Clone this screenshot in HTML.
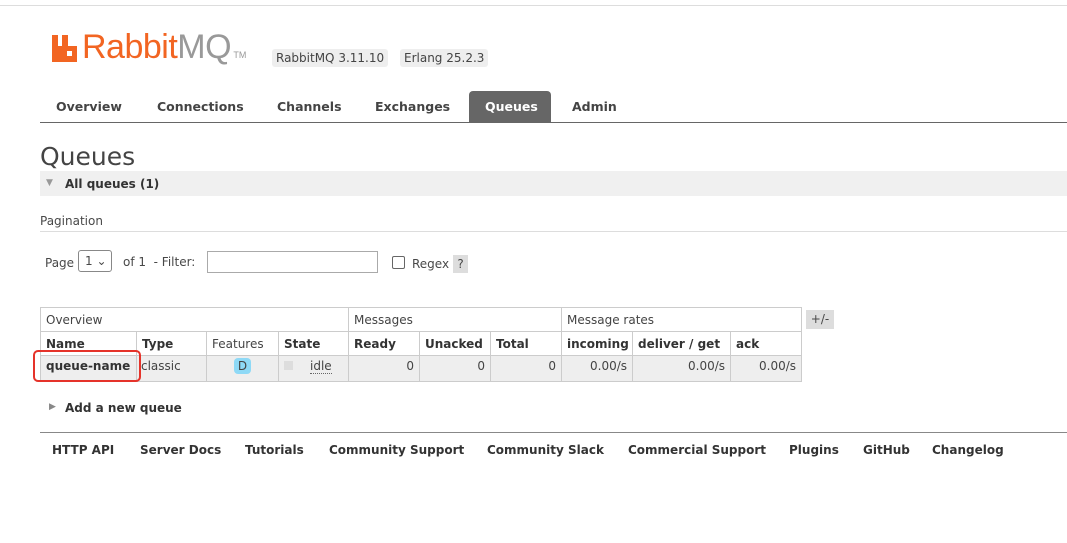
<!DOCTYPE html>
<html><head><style>
body{margin:0;width:1067px;height:543px;background:#fff;font-family:"DejaVu Sans","Liberation Sans",sans-serif;font-size:12px;color:#484848;position:relative;overflow:hidden}
.a{position:absolute;white-space:nowrap}
.b{font-weight:bold;color:#333}
.nav{font-size:12.5px;font-weight:bold;color:#444}
table{position:absolute;left:40px;top:307px;border-collapse:collapse;font-size:12px;table-layout:fixed}
td{border:1px solid #ccc;padding:0 5px;height:23px;color:#444;overflow:hidden}
tr.h td{font-weight:bold;color:#333}
tr.d td{background:#eee;height:22px;text-align:right;vertical-align:top;padding-top:3px;box-sizing:content-box}
</style></head><body>
<div class="a" style="left:0;top:5px;width:1067px;height:1px;background:#ddd"></div>
<svg class="a" style="left:52px;top:35px" width="27" height="27" viewBox="0 0 27 27"><path d="M0 0h6v11h4V0h6v11h9v16H0z" fill="#f26522"/><rect x="15" y="16" width="5" height="5" fill="#fff"/></svg>
<div class="a" style="left:82px;top:28px;font-family:'Liberation Sans',sans-serif;font-size:34px;color:#f26522;letter-spacing:-0.5px">Rabbit<span style="color:#999">MQ</span><span style="font-size:9px;color:#999;letter-spacing:0"> TM</span></div>
<div class="a" style="left:272px;top:49px;background:#eee;padding:2px 4px;border-radius:3px;color:#444">RabbitMQ 3.11.10</div>
<div class="a" style="left:400px;top:49px;background:#eee;padding:2px 4px;border-radius:3px;color:#444">Erlang 25.2.3</div>
<div class="a nav" style="left:56px;top:99px">Overview</div>
<div class="a nav" style="left:157px;top:99px">Connections</div>
<div class="a nav" style="left:277px;top:99px">Channels</div>
<div class="a nav" style="left:375px;top:99px">Exchanges</div>
<div class="a" style="left:469px;top:91px;width:82px;height:31px;background:#666;border-radius:4px 4px 0 0"></div>
<div class="a nav" style="left:485px;top:99px;color:#fff">Queues</div>
<div class="a nav" style="left:572px;top:99px">Admin</div>
<div class="a" style="left:40px;top:122px;width:1027px;height:1px;background:#666"></div>
<div class="a" style="left:40px;top:142px;font-size:25px;color:#444">Queues</div>
<div class="a" style="left:40px;top:171px;width:1027px;height:25px;background:#f0f0f0"></div>
<div class="a" style="left:46px;top:178px;font-size:9px;color:#999">▼</div>
<div class="a b" style="left:65px;top:177px">All queues (1)</div>
<div class="a" style="left:40px;top:214px">Pagination</div>
<div class="a" style="left:40px;top:231px;width:1027px;height:1px;background:#ddd"></div>
<div class="a" style="left:45px;top:256px">Page</div>
<div class="a" style="left:78px;top:250px;width:34px;height:22px;border:1px solid #888;border-radius:3px;box-sizing:border-box;padding:3px 6px">1 ⌄</div>
<div class="a" style="left:123px;top:255px">of 1 &nbsp;- Filter:</div>
<div class="a" style="left:207px;top:251px;width:171px;height:22px;border:1px solid #aaa;box-sizing:border-box"></div>
<div class="a" style="left:392px;top:256px;width:11px;height:11px;border:1px solid #666;border-radius:2px"></div>
<div class="a" style="left:412px;top:257px">Regex</div>
<div class="a" style="left:453px;top:255px;width:15px;height:18px;background:#ddd;text-align:center;line-height:18px">?</div>
<table style="width:761px">
<colgroup><col style="width:96px"><col style="width:70px"><col style="width:72px"><col style="width:70px"><col style="width:71px"><col style="width:71px"><col style="width:71px"><col style="width:71px"><col style="width:98px"><col style="width:71px"></colgroup>
<tr><td colspan="4">Overview</td><td colspan="3">Messages</td><td colspan="3">Message rates</td></tr>
<tr class="h"><td>Name</td><td>Type</td><td style="font-weight:normal;color:#444">Features</td><td>State</td><td>Ready</td><td>Unacked</td><td>Total</td><td>incoming</td><td>deliver / get</td><td>ack</td></tr>
<tr class="d"><td style="text-align:left;font-weight:bold;color:#333">queue-name</td><td style="text-align:left;padding-left:4px">classic</td><td style="text-align:center"><span style="background:#8ed9f6;border-radius:4px;padding:1px 4px">D</span></td><td style="text-align:left"><span style="display:inline-block;width:9px;height:9px;background:#ddd;margin-right:17px"></span><span style="border-bottom:1px dotted #666">idle</span></td><td>0</td><td>0</td><td>0</td><td>0.00/s</td><td>0.00/s</td><td>0.00/s</td></tr>
</table>
<div class="a" style="left:806px;top:310px;width:28px;height:19px;background:#ddd;text-align:center;line-height:19px">+/-</div>
<div class="a" style="left:33px;top:350px;width:108px;height:32px;border:2px solid #e5332a;border-radius:5px;box-sizing:border-box"></div>
<div class="a" style="left:49px;top:402px;font-size:9px;color:#888">▶</div>
<div class="a b" style="left:65px;top:401px">Add a new queue</div>
<div class="a" style="left:40px;top:432px;width:1027px;height:1px;background:#888"></div>
<div class="a b" style="left:52px;top:443px">HTTP API</div>
<div class="a b" style="left:140px;top:443px">Server Docs</div>
<div class="a b" style="left:245px;top:443px">Tutorials</div>
<div class="a b" style="left:329px;top:443px">Community Support</div>
<div class="a b" style="left:487px;top:443px">Community Slack</div>
<div class="a b" style="left:628px;top:443px">Commercial Support</div>
<div class="a b" style="left:789px;top:443px">Plugins</div>
<div class="a b" style="left:863px;top:443px">GitHub</div>
<div class="a b" style="left:932px;top:443px">Changelog</div>
</body></html>
